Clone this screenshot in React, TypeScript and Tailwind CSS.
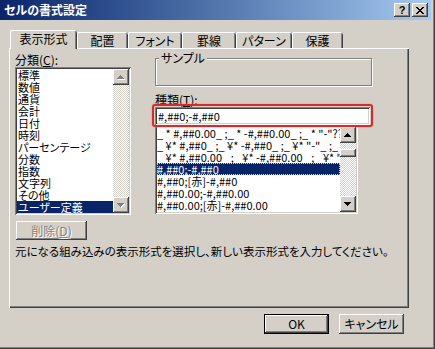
import React from 'react';

const base = "font-['Noto_Sans_CJK_JP','Noto_Sans',sans-serif] text-[12px] text-black [font-feature-settings:'palt']";
const raised = 'shadow-[inset_-1px_-1px_#404040,inset_1px_1px_#fff,inset_-2px_-2px_#808080,inset_2px_2px_#d4d0c8]';
const sunken = 'shadow-[inset_1px_1px_#808080,inset_-1px_-1px_#fff,inset_2px_2px_#404040,inset_-2px_-2px_#d4d0c8]';
const checker = 'bg-[conic-gradient(#fff_25%,#d4d0c8_0_50%,#fff_0_75%,#d4d0c8_0)] bg-[length:2px_2px]';

const categories = [
  '標準', '数値', '通貨', '会計', '日付', '時刻', 'パーセンテージ', '分数', '指数', '文字列', 'その他', 'ユーザー定義',
];

const formats = [
  '_ * #,##0.00_ ;_ * -#,##0.00_ ;_ * "-"??_ ;_ @_ ',
  '_ ¥* #,##0_ ;_ ¥* -#,##0_ ;_ ¥* "-"_ ;_ @_ ',
  '_ ¥* #,##0.00_ ;_ ¥* -#,##0.00_ ;_ ¥* "-"??_ ;_ @_ ',
  '#,##0;-#,##0',
  '#,##0;[赤]-#,##0',
  '#,##0.00;-#,##0.00',
  '#,##0.00;[赤]-#,##0.00',
];

const tabs = [
  { label: '配置', w: 'w-[51px]' },
  { label: 'フォント', w: 'w-[54px]' },
  { label: '罫線', w: 'w-[54px]' },
  { label: 'パターン', w: 'w-[56px]' },
  { label: '保護', w: 'w-[51px]' },
];

function Arrow({ up, disabled }: { up?: boolean; disabled?: boolean }) {
  const d = up ? 'M3 0h1v1h1v1h1v1h1v1H0V3h1V2h1V1h1z' : 'M0 0h7v1H6v1H5v1H4v1H3V3H2V2H1V1H0z';
  return (
    <div className={`w-4 h-4 bg-[#d4d0c8] ${raised} flex items-center justify-center`}>
      <svg width="8" height="5" viewBox="0 0 8 5" shapeRendering="crispEdges">
        {disabled && <path d={d} fill="#fff" transform="translate(1 1)" />}
        <path d={d} fill={disabled ? '#808080' : '#000'} />
      </svg>
    </div>
  );
}

function Scrollbar({ disabled }: { disabled?: boolean }) {
  return (
    <div className={`w-4 h-full flex flex-col ${checker}`}>
      <Arrow up disabled={disabled} />
      <div className="flex-1">
        {!disabled && <div className={`mt-[6px] w-4 h-[8px] bg-[#d4d0c8] ${raised}`} />}
      </div>
      <Arrow disabled={disabled} />
    </div>
  );
}

function Tabs() {
  return (
    <div className="mt-[10px] pl-[10px] h-[19px] flex items-start relative z-10">
      <div className="w-[67px] h-[19px] bg-[#d4d0c8] rounded-t-[2px] shadow-[inset_1px_0_#fff,inset_0_1px_#fff,inset_-1px_0_#404040,inset_-2px_0_#808080] flex justify-center pt-[2px] leading-[14px]">
        表示形式
      </div>
      {tabs.map((t) => (
        <div
          key={t.label}
          className={`${t.w} mt-[2px] h-[16px] rounded-t-[2px] shadow-[inset_1px_0_#fff,inset_0_1px_#fff,inset_-1px_0_#404040,inset_-2px_0_#808080] flex justify-center pt-[2px] leading-[14px]`}
        >
          {t.label}
        </div>
      ))}
    </div>
  );
}

export default function App() {
  return (
    <div className={`w-[435px] h-[349px] bg-[#d4d0c8] ${base} flex flex-col shadow-[inset_-1px_-1px_#404040,inset_-2px_-2px_#808080]`}>
      {/* title bar */}
      <div className="h-[20px] mr-[4px] bg-linear-to-r from-[#0a246a] to-[#a6caf0] flex items-center justify-between pl-[4px] pr-[3px]">
        <span className="text-white font-bold leading-[14px]">セルの書式設定</span>
        <div className="flex gap-[2px]">
          <div className={`w-4 h-[14px] bg-[#d4d0c8] ${raised} flex items-center justify-center font-bold text-[11px] leading-none font-['Liberation_Sans',sans-serif]`}>
            ?
          </div>
          <div className={`w-4 h-[14px] bg-[#d4d0c8] ${raised} flex items-center justify-center`}>
            <svg width="8" height="7" viewBox="0 0 8 7" shapeRendering="crispEdges">
              <path d="M0 0h2v1h1v1h2V1h1V0h2v1H7v1H6v1H5v1h1v1h1v1h1v1H6V6H5V5H3v1H2v1H0V6h1V5h1V4h1V3H2V2H1V1H0z" fill="#000" />
            </svg>
          </div>
        </div>
      </div>

      <Tabs />

      {/* tab page */}
      <div className="ml-[9px] -mt-[1px] w-[400px] h-[260px] shadow-[inset_1px_1px_#fff,inset_-1px_-1px_#404040,inset_-2px_-2px_#808080] pl-[6px] pt-[5px] flex flex-col">
        <div className="flex">
          <div className="w-[116px] flex flex-col">
            <div className="h-[14px] leading-[14px]">
              分類(<span className="underline">C</span>):
            </div>
            <div className={`h-[148px] bg-white ${sunken} p-[2px] flex`}>
              <div className="flex-1 flex flex-col text-[11px]">
                {categories.map((c, i) => (
                  <div
                    key={c}
                    className={`h-[12px] leading-[12px] pl-[1px] whitespace-nowrap ${i === categories.length - 1 ? 'bg-[#0a246a] text-white' : ''}`}
                  >
                    {c}
                  </div>
                ))}
              </div>
              <Scrollbar disabled />
            </div>
          </div>

          <div className="ml-[24px] w-[218px] flex flex-col">
            <div className="relative mt-[5px] w-[217px] h-[28px] border border-[#808080] shadow-[inset_1px_1px_#fff,1px_1px_#fff]">
              <span className="absolute left-[3px] -top-[8px] px-[2px] bg-[#d4d0c8] leading-[14px]">サンプル</span>
            </div>
            <div className="mt-[7px] h-[14px] leading-[14px]">
              種類(<span className="underline">T</span>):
            </div>
            <div className={`relative h-[18px] w-[215px] bg-white ${sunken} pl-[3px] flex items-center leading-[12px] text-[11px]`}>
              #,##0;-#,##0
              <div className="absolute -left-[3px] -top-[3px] -right-[3px] -bottom-[2px] border-2 border-[#dc2828] rounded-[3px] shadow-[0_0_2px_#f08080]" />
            </div>
            <div className={`h-[89px] w-[203px] bg-white ${sunken} p-[2px] flex`}>
              <div className="flex-1 flex flex-col overflow-hidden text-[11px]">
                {formats.map((f, i) => (
                  <div
                    key={f}
                    className={`h-[12px] shrink-0 leading-[12px] whitespace-pre ${i === 3 ? 'bg-[#0a246a] text-white outline-1 outline-dotted outline-[#d4d0c8] -outline-offset-1' : ''}`}
                  >
                    {f}
                  </div>
                ))}
              </div>
              <Scrollbar />
            </div>
          </div>
        </div>

        <div className={`mt-[6px] ml-[1px] w-[71px] h-[19px] ${raised} flex items-center justify-center text-[#808080] [text-shadow:1px_1px_#fff]`}>
          削除(<span className="underline">D</span>)
        </div>
        <div className="mt-[4px] leading-[14px] whitespace-nowrap text-[11.5px]">
          元になる組み込みの表示形式を選択し、新しい表示形式を入力してください。
        </div>
      </div>

      <div className="flex justify-end gap-[10px] mt-[6px] pr-[31px]">
        <div className="w-[65px] h-[20px] border border-black bg-[#d4d0c8] flex items-center justify-center">
          <div className={`w-full h-full ${raised} flex items-center justify-center`}>OK</div>
        </div>
        <div className={`w-[65px] h-[20px] ${raised} flex items-center justify-center`}>キャンセル</div>
      </div>
    </div>
  );
}
